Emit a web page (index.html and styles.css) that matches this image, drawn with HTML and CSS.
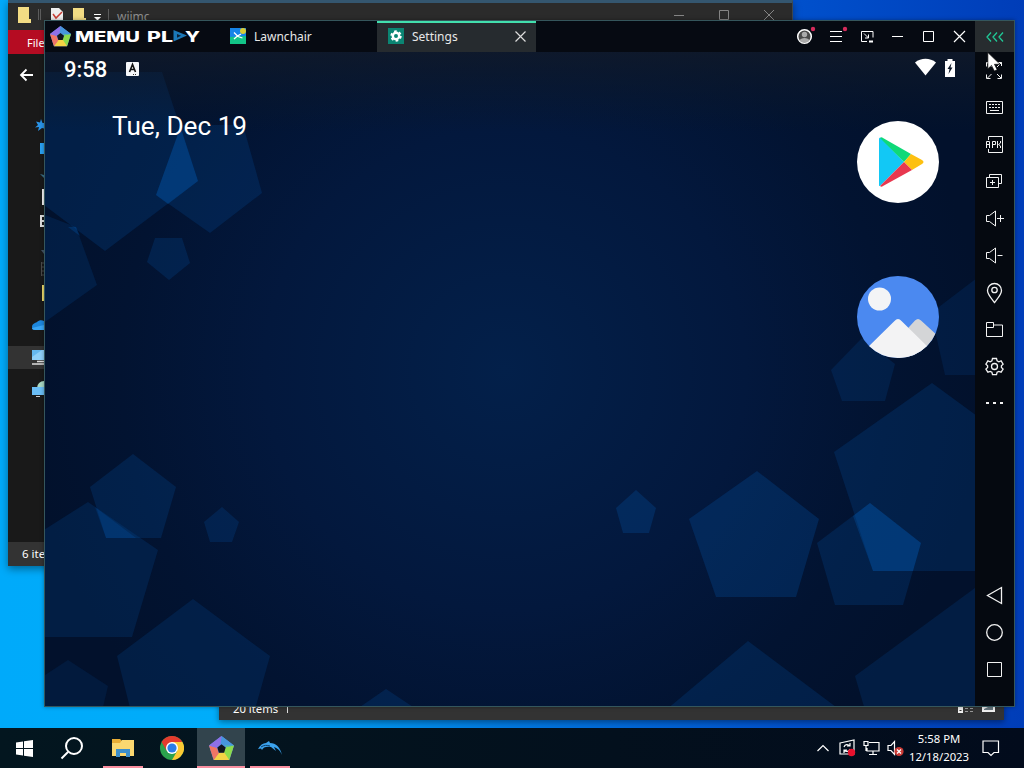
FILE: index.html
```
<!DOCTYPE html>
<html lang="en">

<head>
    <meta charset="UTF-8">
    <meta name="viewport" content="width=device-width, initial-scale=1.0">
    <title>Desktop</title>
    <link rel="stylesheet" href="styles.css">
</head>

<body>

    <svg class="defs" width="0" height="0">
        <symbol id="memu" viewBox="0 0 24 24">
            <path d="M12 0L24 9l-4.500 14h-15L0 9z" fill="#5b8df0" />
            <path d="M12 0L24 9l-7.500 1.500L11 7.500z" fill="#4796dc" />
            <path d="M24 9l-4.500 14L13 17l3.500-6.500z" fill="#8ddb4c" />
            <path d="M24 9l-7.500 1.500-2-1.500z" fill="#55c09c" />
            <path d="M19.500 23h-15L9 16l5.500-.5z" fill="#f4d345" />
            <path d="M4.500 23L0 9l7.500 2 2 5.500z" fill="#f07565" />
            <path d="M0 9l12-9-1 7.500-3.500 4z" fill="#8f70e6" />
            <path d="M12 8l4 3-1.500 5h-5L8 11z" fill="#11151d" />
        </symbol>
    </svg>

    <div class="desktop">

        <!-- file explorer behind the emulator -->
        <div class="window explorer">
            <div class="explorer-title">
                <svg class="quick" width="100" height="26" viewBox="10 4 100 26">
                    <path d="M18 7h11v12h2v4H18z" fill="#f3dc84" />
                    <path d="M38.500 9v11M40.500 9v11M108.500 9v11" stroke="#5c5c5c" />
                    <path d="M51 8h8l4 4v11H51z" fill="#eee" />
                    <path d="M53 14l3 4 6-6" fill="none" stroke="#c83c32" stroke-width="1.500" />
                    <path d="M73 8h11v10h2v5H73z" fill="#f3dc84" />
                    <path d="M94 14.500h7" stroke="#fff" />
                    <path d="M94 17h7l-3.500 3.500z" fill="#fff" />
                </svg>
                <span class="explorer-name">wiimc</span>
                <svg class="explorer-controls" width="104" height="14" viewBox="0 0 104 14" fill="none" stroke="#858585">
                    <path d="M1 7.500h10M46.500 2.500h9v9h-9zM91 2l10 10M101 2l-10 10" />
                </svg>
            </div>
            <div class="explorer-ribbon">File</div>
            <div class="explorer-body">
                <svg width="36" height="488" viewBox="8 54 36 488">
                    <path d="M33 75H21M26.500 69.500L21 75l5.500 5.500" fill="none" stroke="#fff" stroke-width="1.800" />
                    <path d="M41 119l1.500 4H46v6l-4-1-4 3 1-4-4 .5 3-2.500-2-3.500 4 1z" fill="#2a94e8" />
                    <path d="M40 143h4v11h-4z" fill="#2aa1f2" />
                    <path d="M40 174l4 1v3z" fill="#3a708a" />
                    <path d="M42 189h2v16h-2z" fill="#f4f4f4" />
                    <path d="M44 216h-3v10h3M41 221h3" fill="none" stroke="#ddd" stroke-width="2" />
                    <path d="M41 250h3v4z" fill="#456" />
                    <path d="M41.500 262v14M44 263h-2M44 267h-2M44 271h-2M44 275h-2" stroke="#4a4a4a" />
                    <path d="M42 285h2v16h-2z" fill="#ecd96c" />
                    <path d="M32 327c0-3 3-4 5-5 2-2 5-2 7-1v9H35c-2 0-3-1-3-3z" fill="#1d87dd" />
                    <path d="M32 328l12-3v5H35c-2 0-3-1-3-2z" fill="#3aa6f5" />
                    <path d="M8 346h36v23H8z" fill="#333" />
                    <path d="M32 350h12v10H32z" fill="#65b8f0" />
                    <path d="M32 357l10-7h2v10H32z" fill="#8fd0fa" />
                    <path d="M37 361.500h7M32 364h12" stroke="#ddd" stroke-width="1.500" />
                    <circle cx="44" cy="388" r="7" fill="#a9d8c4" />
                    <path d="M32 387h12v8H32z" fill="#6abdf5" />
                    <path d="M36 396.500h4" stroke="#ccc" />
                </svg>
            </div>
            <div class="explorer-status">6 items</div>
        </div>

        <div class="window explorer-lower">
            <div class="lower-status">
                <span>20 items</span>
                <i class="divider"></i>
                <svg class="view-icons" width="40" height="14" viewBox="0 0 40 14">
                    <path d="M0 0h5v9H0z" fill="#eee" />
                    <path d="M1.500 2.500h2M1.500 6.500h2" stroke="#333" />
                    <path d="M7 4.500h9M7 7.500h9" stroke="#999" stroke-dasharray="3 2" />
                    <path d="M24 0h13v8H24z" fill="#f0f0f0" />
                    <path d="M26 5l4-2h5v3h-9z" fill="#67757d" />
                </svg>
            </div>
        </div>

        <!-- emulator -->
        <div class="window emulator">
            <div class="titlebar">
                <div class="brand">
                    <svg class="brand-mark" width="21" height="21"><use href="#memu" /></svg>
                    <svg width="130" height="22" viewBox="0 -4 130 22" class="brand-name">
                        <text x="0" y="12.500" textLength="65" lengthAdjust="spacingAndGlyphs">MEMU</text>
                        <text x="72" y="12.500" textLength="26" lengthAdjust="spacingAndGlyphs">PL</text>
                        <path d="M98.500 1l13.500 5.500-13.500 6z" fill="#1b78b8" />
                        <path d="M102 5l4 1.800-4 2z" fill="#0b2236" />
                        <text x="110" y="12.500" textLength="15" lengthAdjust="spacingAndGlyphs">Y</text>
                    </svg>
                </div>
                <div class="tab">
                    <svg width="16" height="16" viewBox="0 0 16 16">
                        <path d="M0 0h16v16H0z" fill="#1684e8" />
                        <path d="M0 9l16-1v8H0z" fill="#12c487" />
                        <circle cx="13" cy="3" r="3" fill="#d9cb35" />
                        <path d="M4 4.500l4 4 4.500 1.500M4 11l3.500-3L11 6" fill="none" stroke="#fff" stroke-width="1.300" />
                    </svg>
                    <span>Lawnchair</span>
                </div>
                <div class="tab active">
                    <svg width="16" height="16" viewBox="0 0 16 16">
                        <path d="M0 0h16v16H0z" fill="#0b8573" />
                        <circle cx="8" cy="8" r="4.800" fill="none" stroke="#fff" stroke-width="1.800" stroke-dasharray="2.600 2.427" />
                        <circle cx="8" cy="8" r="3.200" fill="none" stroke="#fff" stroke-width="2.400" />
                    </svg>
                    <span>Settings</span>
                    <svg class="tab-close" width="11" height="11" viewBox="0 0 11 11" stroke="#ddd" stroke-width="1.200"><path d="M.5 .5l10 10M10.500 .5l-10 10" /></svg>
                </div>
                <div class="controls">
                    <svg viewBox="0 0 31 31">
                        <circle cx="15.500" cy="15.500" r="6.800" fill="#4a4a4a" stroke="#fff" stroke-width="1.500" />
                        <circle cx="15.500" cy="13.500" r="2.700" fill="#aaa" />
                        <path d="M10.500 19.500c1-3.500 9-3.500 10 0-2 3-8 3-10 0z" fill="#aaa" />
                        <circle cx="24" cy="8" r="2.200" fill="#d42b5b" />
                    </svg>
                    <svg viewBox="0 0 31 31">
                        <path d="M10 10.500h12M10 15.500h12M10 20.500h12" stroke="#fff" />
                        <circle cx="25" cy="8" r="2.200" fill="#d42b5b" />
                    </svg>
                    <svg viewBox="0 0 31 31" fill="none" stroke="#fff">
                        <path d="M16 20.500h-5.500v-10h11.500v6M13 12.500l4.500 4.500M17.500 13.500v3.500H14" />
                        <path d="M18 20.500h4" stroke-width="2" />
                    </svg>
                    <svg viewBox="0 0 31 31" stroke="#fff"><path d="M10 15.500h11" /></svg>
                    <svg viewBox="0 0 31 31" fill="none" stroke="#fff"><path d="M10.500 10.500h10v10h-10z" /></svg>
                    <svg viewBox="0 0 31 31" stroke="#fff" stroke-width="1.200"><path d="M10 10l11 11M21 10l-11 11" /></svg>
                </div>
                <div class="collapse">
                    <svg width="18" height="10" viewBox="0 0 18 10" fill="none" stroke="#20c997" stroke-width="1.300">
                        <path d="M5 .5L1 5l4 4.500M11 .5L7 5l4 4.500M17 .5L13 5l4 4.500" />
                    </svg>
                </div>
            </div>

            <div class="emulator-body">
                <div class="screen">
                    <svg class="wallpaper" width="930" height="654" viewBox="45 52 930 654">
                        <defs>
                            <radialGradient id="glow" gradientUnits="userSpaceOnUse" cx="505" cy="370" r="480">
                                <stop offset="0" stop-color="#03204a" />
                                <stop offset="0.500" stop-color="#03183d" />
                                <stop offset="0.800" stop-color="#021331" />
                                <stop offset="1" stop-color="#02112c" />
                            </radialGradient>
                            <linearGradient id="shade" x1="0" y1="0" x2="0" y2="1">
                                <stop offset="0" stop-color="#121a28" stop-opacity="0.750" />
                                <stop offset="1" stop-color="#0b1828" stop-opacity="0" />
                            </linearGradient>
                        </defs>
                        <path d="M45 52h930v654H45z" fill="url(#glow)" />
                        <g fill="#0450a0" fill-opacity="0.240">
                            <path d="M105 251L198 181 162 72H45L12 181z" />
                            <path d="M210 233L262 193 243 125H181L156 195z" />
                            <path d="M169 280L190 263 182 238H155L147 262z" />
                            <path d="M76 227L97 285 45 322 0 350V215h45z" fill-opacity="0.200" />
                            <path d="M133 454L176 487 161 538H106L90 487z" />
                            <path d="M222 507L239 522 232 542H210L204 522z" />
                            <path d="M88 502L158 550 132 637H40L20 545z" fill-opacity="0.210" />
                            <path d="M193 599L270 656 252 720H133L117 656z" fill-opacity="0.210" />
                            <path d="M68 660L108 686 100 720H35L28 686z" fill-opacity="0.150" />
                            <path d="M386 689L413 707H360z" />
                            <path d="M636 490L656 508 649 533H623L616 508z" fill-opacity="0.300" />
                            <path d="M757 471L819 519 796 597H716L689 519z" fill-opacity="0.300" />
                            <path d="M932 383L1030 455 995 571H873L834 452z" />
                            <path d="M870 503L921 543 903 605H835L817 543z" />
                            <path d="M862 338L895 364 885 401H842L831 370z" fill-opacity="0.200" />
                            <path d="M985 272L1040 316 1020 375H945L931 313z" fill-opacity="0.180" />
                            <path d="M748 641L840 710H666z" />
                            <path d="M975 588V710H865L855 676z" fill-opacity="0.200" />
                        </g>
                        <!-- where two pentagons cross -->
                        <g fill="#0460bd" fill-opacity="0.260">
                            <path d="M180 125L198 181 168 204 156 195 177 137z" />
                            <path d="M95 507L136 538H106z" fill-opacity="0.200" />
                            <path d="M870 503L921 543 913 571H873L853 516z" />
                            <path d="M68 227h8l4 9z" />
                        </g>
                        <path d="M45 52h930v80H45z" fill="url(#shade)" />
                    </svg>

                    <div class="statusbar">
                        <span class="clock">9:58</span>
                        <svg width="14" height="14" viewBox="0 0 14 14">
                            <rect width="13" height="14" rx="1" fill="#f5f7fa" />
                            <path d="M3.500 10l3-7.500L9.500 10M4.500 7.500h4" fill="none" stroke="#111" stroke-width="1.600" />
                            <path d="M7 12.500h4" stroke="#333" stroke-dasharray="1 1" />
                        </svg>
                        <svg class="signal" width="42" height="20" viewBox="0 0 42 20">
                            <path d="M0 4.500C6-.5 15-.5 21 4.500L10.500 17.500z" fill="#fff" />
                            <path d="M30 3h2.500V1h5v2H40v16H30z" fill="#fff" />
                            <path d="M36.500 5l-4 6h2l-1 5 4-6.500h-2z" fill="#0c1728" />
                        </svg>
                    </div>

                    <div class="home">
                        <div class="date">Tue, Dec 19</div>
                        <div class="apps">
                            <svg width="82" height="82" viewBox="0 0 82 82">
                                <circle cx="41" cy="41" r="41" fill="#fff" />
                                <path d="M22 18v46c0 1 .5 1 1 1L47 41 24 17c-1-.5-2 0-2 1z" fill="#12c8f5" />
                                <path d="M23 17c1-1 2-1 3 0L54 33l-7 8z" fill="#0fd978" />
                                <path d="M54 33l11 6c2 1 2 3 0 4L55 49l-8-8z" fill="#fdc010" />
                                <path d="M23 65c1 1 2 1 3 0l29-16-8-8z" fill="#e8384f" />
                            </svg>
                            <svg width="82" height="82" viewBox="0 0 82 82">
                                <clipPath id="round"><circle cx="41" cy="41" r="41" /></clipPath>
                                <g clip-path="url(#round)">
                                    <path d="M0 0h82v82H0z" fill="#4b89f0" />
                                    <circle cx="22.500" cy="23" r="11.500" fill="#f3f4f6" />
                                    <path d="M42 62L58 44.500q3-3 6 0L82 61v21H42z" fill="#d4d5d7" />
                                    <path d="M8 74L37.500 45q3.500-4 7 0L74 74v8H8z" fill="#f3f3f4" />
                                </g>
                            </svg>
                        </div>
                    </div>
                </div>

                <div class="sidebar">
                    <svg viewBox="0 0 38 37"><path d="M16.500 15l-4-4M11.500 14.500v-4h4M22 15l4.500-4.500M23 10.500h3.500V14M16.500 22l-4 4M11.500 22.500v4h4M22 22l4 4M26.500 22.500v4h-4" /></svg>
                    <svg viewBox="0 0 38 37"><path d="M11.500 12.500h16v12h-16zM15 21.500h9" /><path d="M14 15.500h11M14 18.500h11" stroke-dasharray="2 1" /></svg>
                    <svg viewBox="0 0 38 37"><path d="M13.500 14v-3.500h14v16h-14V23M11.500 22v-6.500h3V22M11.500 18.500h3M17.500 22v-6.500h3v3h-3M22.500 15v7M25.500 15v2l-2 1.500 2 1.500v2" /></svg>
                    <svg viewBox="0 0 38 37"><path d="M14.500 14v-2.500h12v9H24M11.500 14.500h12v10h-12zM17.500 17v5M15 19.500h5" /></svg>
                    <svg viewBox="0 0 38 37"><path d="M11.500 15.500h3l6-4.500v15l-6-4.500h-3zM22 18.500h7M25.500 15v7" /></svg>
                    <svg viewBox="0 0 38 37"><path d="M11.500 15.500h3l6-4.500v15l-6-4.500h-3zM22.500 18.500h5" /></svg>
                    <svg viewBox="0 0 38 37"><path d="M19.500 28.500c-3-4-7-8-7-12a7 7 0 0 1 14 0c0 4-4 8-7 12z" stroke-width="1.300" /><circle cx="19.500" cy="16" r="2.700" stroke-width="1.300" /></svg>
                    <svg viewBox="0 0 38 37"><path d="M11.500 25.500v-14h7v2.500h9v11.500zM11.500 16.500h7V14" /></svg>
                    <svg viewBox="0 0 38 37"><path stroke-width="1.300" d="M17.500 10.500h4l.6 2.400 1.700.9 2.300-.9 2 3.200-1.700 1.600v1.700l1.700 1.600-2 3.200-2.300-.8-1.700.9-.6 2.300h-4l-.6-2.300-1.700-.9-2.300.8-2-3.200 1.700-1.600v-1.700l-1.700-1.600 2-3.200 2.300.9 1.700-.9z" /><circle cx="19.500" cy="18.500" r="3" stroke-width="1.300" /></svg>
                    <svg viewBox="0 0 38 37"><path d="M11 18h17" stroke-width="2" stroke-dasharray="3 4" /></svg>
                    <div class="nav-keys">
                        <svg viewBox="0 0 38 37"><path d="M26.500 10.500v16l-14-8z" stroke-width="1.300" /></svg>
                        <svg viewBox="0 0 38 37"><circle cx="19.500" cy="18.500" r="7.800" stroke-width="1.300" /></svg>
                        <svg viewBox="0 0 38 37"><path d="M12.500 11.500h14v14h-14z" /></svg>
                    </div>
                </div>
            </div>
        </div>

        <svg class="cursor" width="14" height="19" viewBox="0 0 12 17">
            <path d="M.5 .5v14.500l3.300-3 2.500 5 2.500-1.200-2.400-4.800h5z" fill="#fff" stroke="#111" stroke-width=".6" />
        </svg>

        <div class="taskbar">
            <div class="task">
                <svg width="17" height="17" viewBox="0 0 17 17" fill="#fff"><path d="M0 2.500l7-1V8H0zM8 1.300L17 0v8H8zM0 9h7v6.500l-7-1zM8 9h9v8l-9-1.300z" /></svg>
            </div>
            <div class="task search">
                <svg width="24" height="24" viewBox="0 0 24 24" fill="none" stroke="#fff" stroke-width="2"><circle cx="14" cy="10" r="8" /><path d="M8 16L1.500 22.500" /></svg>
            </div>
            <div class="task open">
                <svg width="22" height="20" viewBox="0 0 22 20">
                    <path d="M0 1h8l2 2h11v15H0z" fill="#e9ae36" />
                    <path d="M0 5h8l2-3h12v16H0z" fill="#fbd870" />
                    <path d="M4 19v-8h14v8h-4v-4H8v4z" fill="#3d8fcb" />
                </svg>
            </div>
            <div class="task">
                <svg width="24" height="24" viewBox="0 0 24 24">
                    <circle cx="12" cy="12" r="12" fill="#2ba24c" />
                    <path d="M1.600 6A12 12 0 0 1 22.400 6H12L6.800 15z" fill="#e33b2e" />
                    <path d="M12 24A12 12 0 0 0 22.400 6H12l5.200 9z" fill="#fcc934" />
                    <circle cx="12" cy="12" r="6" fill="#fff" />
                    <circle cx="12" cy="12" r="4.600" fill="#2a7de8" />
                </svg>
            </div>
            <div class="task open current">
                <svg width="25" height="25"><use href="#memu" /></svg>
            </div>
            <div class="task open">
                <svg width="24" height="14" viewBox="0 0 24 14">
                    <path d="M0 8C2 4 5 2 8 2l3-2 1 2c6 0 10 4 12 12-2-5-5-7-8-8l2 4-5-4C9 5 5 6 4 9L3 7.500z" fill="#3ba2ed" />
                    <path d="M3 6c3-2 6-2 9-1" fill="none" stroke="#0b3d68" />
                </svg>
            </div>

            <div class="tray">
                <svg width="90" height="20" viewBox="0 0 90 20" fill="none" stroke="#fff" stroke-width="1.200">
                    <path d="M1.500 13L7 7.500l5.500 5.500" />
                    <path d="M24 5l14-3v14H24zM28 9c1-3 4-3 6-1M34 5v3h-3M34 11c-1 3-4 3-6 1M28 15v-3h3" />
                    <circle cx="35.500" cy="14.500" r="3.700" fill="#e8112d" stroke="none" />
                    <path d="M53 4.500h10v8.500H51v-3M57 13v3.500M53 16.500h8M48 3.500h4v4h-4zM50 8v5" />
                    <path d="M72 7.500h3l3.500-4v13l-3.500-4h-3z" />
                    <circle cx="83" cy="13.500" r="4.600" fill="#c93a35" stroke="none" />
                    <path d="M81 11.500l4 4M85 11.500l-4 4" />
                </svg>
                <div class="datetime">
                    <div>5:58 PM</div>
                    <div>12/18/2023</div>
                </div>
                <svg class="action" width="18" height="17" viewBox="0 0 18 17" fill="none" stroke="#fff" stroke-width="1.200"><path d="M1 1h15.500v11.500H12l-3 3-3-3H1z" /></svg>
            </div>
        </div>

    </div>

</body>

</html>
```
FILE: styles.css
```
body {
    margin: 0;
    font-family: "Noto Sans", "Open Sans", sans-serif;
    font-size: 12px;
    color: #fff;
}

svg {
    display: block;
    flex: none;
}

.defs {
    position: absolute;
}

.desktop {
    position: relative;
    width: 1024px;
    height: 768px;
    overflow: hidden;
    background: linear-gradient(90deg, #00aafa 0%, #00adfa 22%, #0078e0 50%, #0050cc 78%, #003db8 100%);
}

.window {
    position: absolute;
    box-sizing: border-box;
    display: flex;
    flex-direction: column;
}

/* explorer windows */

.explorer {
    left: 8px;
    top: 0;
    width: 785px;
    height: 566px;
    background: #191919;
    border-top: 3px solid #34566f;
    border-right: 1px solid #3c454d;
    box-shadow: 0 3px 8px rgba(0, 0, 0, 0.4);
}

.explorer-title {
    display: flex;
    align-items: flex-start;
    height: 27px;
    padding: 1px 15px 0 2px;
    background: #2b2b2b;
}

.explorer-name {
    margin-left: 7px;
    padding-top: 4px;
    line-height: 17px;
    color: #8d8d8d;
}

.explorer-controls {
    margin: 4px 0 0 auto;
}

.explorer-ribbon {
    height: 24px;
    padding-left: 19px;
    font-size: 11px;
    line-height: 26px;
    background: #b50c22;
}

.explorer-body {
    flex: 1;
}

.explorer-status {
    height: 24px;
    padding-left: 14px;
    font-size: 11.5px;
    line-height: 24px;
    background: #333;
}

.explorer-lower {
    left: 219px;
    top: 600px;
    width: 785px;
    height: 120px;
    background: #333;
    justify-content: flex-end;
    box-shadow: 0 2px 6px rgba(0, 0, 0, 0.4);
}

.lower-status {
    display: flex;
    height: 21px;
    padding: 0 6px 0 14px;
    font-size: 11.3px;
    line-height: 20px;
}

.divider {
    width: 1px;
    height: 14px;
    margin-left: 9px;
    background: #ddd;
}

.view-icons {
    margin: 5px 0 0 auto;
}

/* emulator */

.emulator {
    left: 44px;
    top: 20px;
    width: 971px;
    height: 687px;
    background: #060a12;
    border: 1px solid #35565c;
    box-shadow: 0 0 4px rgba(0, 0, 0, 0.35);
}

.titlebar {
    display: flex;
    height: 31px;
}

.brand {
    display: flex;
    align-items: flex-start;
    width: 169px;
    padding: 5px 0 0 5px;
    box-sizing: border-box;
}

.brand-name {
    margin: -1px 0 0 4px;
    font-family: Inter, sans-serif;
    font-size: 15px;
    font-weight: 800;
    fill: #fff;
}

.tab {
    display: flex;
    align-items: center;
    gap: 8px;
    box-sizing: border-box;
    width: 163px;
    padding: 0 10px 1px 16px;
    color: #e8e8e8;
}

.tab span {
    padding-top: 1px;
}

.tab.active {
    width: 159px;
    padding: 0 10px 3px 11px;
    border-top: 2px solid #42dfae;
    background: #262b2f;
}

.tab-close {
    margin-left: auto;
}

.controls {
    display: flex;
    margin-left: auto;
}

.controls svg {
    width: 31px;
    height: 31px;
}

.collapse {
    display: flex;
    align-items: center;
    justify-content: center;
    width: 39px;
    background: #272c2f;
}

.emulator-body {
    display: flex;
    flex: 1;
}

.screen {
    position: relative;
    width: 930px;
}

.wallpaper {
    position: absolute;
    left: 0;
    top: 0;
}

.statusbar {
    position: relative;
    display: flex;
    align-items: center;
    height: 34px;
    padding: 0 19px;
    font-family: Roboto, sans-serif;
}

.clock {
    width: 62px;
    font-size: 22px;
    font-weight: 500;
}

.signal {
    margin: 0 -1px 2px auto;
}

.home {
    position: relative;
    display: flex;
    justify-content: space-between;
    padding: 25px 36px 0 67px;
}

.date {
    font-family: Roboto, sans-serif;
    font-size: 26.2px;
    line-height: 30px;
}

.apps {
    display: flex;
    flex-direction: column;
    gap: 73px;
    padding-top: 10px;
}

.sidebar {
    display: flex;
    flex-direction: column;
    box-sizing: border-box;
    width: 39px;
    height: 654px;
    padding-bottom: 18px;
    background: #050910;
}

.sidebar svg {
    width: 38px;
    height: 37px;
    fill: none;
    stroke: #f2f2f2;
}

.nav-keys {
    margin-top: auto;
}

.cursor {
    position: absolute;
    left: 987px;
    top: 52px;
}

/* taskbar */

.taskbar {
    position: absolute;
    left: 0;
    bottom: 0;
    display: flex;
    gap: 1px;
    width: 100%;
    height: 40px;
    background: linear-gradient(90deg, #03161f, #03101d 60%, #020b1c);
}

.task {
    display: flex;
    align-items: center;
    justify-content: center;
    position: relative;
    width: 48px;
}

.search {
    box-sizing: border-box;
    width: 49px;
    padding-right: 3px;
}

.task.open::after {
    content: "";
    position: absolute;
    left: 4px;
    right: 4px;
    bottom: 0;
    height: 2px;
    background: #fa8fa0;
}

.task.current {
    background: #32444d;
}

.task.current::after {
    left: 0;
    right: 0;
}

.tray {
    display: flex;
    align-items: center;
    margin-left: auto;
    padding-right: 24px;
}

.datetime {
    width: 68px;
    margin: 0 8px 0 0;
    font-size: 11.3px;
    line-height: 18px;
    text-align: center;
    white-space: nowrap;
}

.datetime div {
    position: relative;
    left: -1px;
}

.action {
    margin-top: 1px;
}
```
